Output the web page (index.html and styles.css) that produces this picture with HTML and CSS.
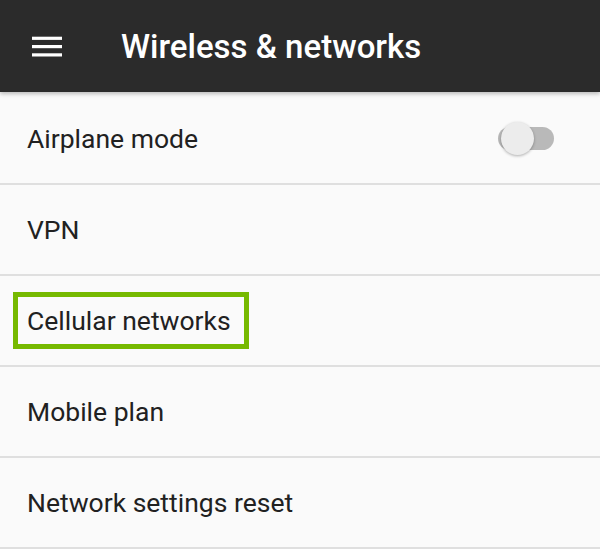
FILE: index.html
```html
<!DOCTYPE html>
<html>
<head>
<meta charset="utf-8">
<link rel="stylesheet" href="styles.css">
</head>
<body>
<header class="appbar">
  <svg class="menu" width="30" height="21" viewBox="0 0 30 21">
    <rect x="0" y="0.7" width="30" height="3.2" fill="#fff"/>
    <rect x="0" y="9" width="30" height="3.2" fill="#fff"/>
    <rect x="0" y="17.3" width="30" height="3.2" fill="#fff"/>
  </svg>
  <h1 class="title">Wireless &amp; networks</h1>
</header>
<ul class="list">
  <li class="row">
    <span class="label">Airplane mode</span>
    <span class="switch"><span class="track"></span><span class="thumb"></span></span>
  </li>
  <li class="row"><span class="label">VPN</span></li>
  <li class="row"><span class="label highlight">Cellular networks</span></li>
  <li class="row"><span class="label">Mobile plan</span></li>
  <li class="row"><span class="label">Network settings reset</span></li>
</ul>
</body>
</html>
```
FILE: styles.css
```css
html, body {
  margin: 0;
  padding: 0;
  background: #fafafa;
  font-family: Roboto, "Noto Sans", sans-serif;
  width: 600px;
  height: 549px;
  overflow: hidden;
}
.appbar {
  height: 92px;
  background: #2b2b2b;
  display: flex;
  align-items: center;
  padding-left: 32px;
  box-shadow: 0 2px 4px rgba(0,0,0,0.25);
  position: relative;
  z-index: 1;
}
.menu {
  display: block;
  flex: none;
}
.title {
  margin: 0 0 0 59px;
  color: #fff;
  font-size: 33px;
  font-weight: 500;
  letter-spacing: 0;
}
.list {
  list-style: none;
  margin: 0;
  padding: 0;
  padding-top: 2px;
}
.row {
  height: 89px;
  border-bottom: 2px solid #dfdfdf;
  display: flex;
  align-items: center;
  padding-left: 27px;
  padding-right: 46px;
}
.label {
  font-size: 26.5px;
  color: #212121;
}
.highlight {
  border: 5px solid #76b900;
  margin-left: -14px;
  padding: 8px 13px 8px 9px;
}
.switch {
  margin-left: auto;
  position: relative;
  width: 56px;
  height: 33px;
  display: block;
}
.track {
  position: absolute;
  right: 0;
  top: 5px;
  width: 56px;
  height: 23px;
  border-radius: 12px;
  background: #b9b9b9;
}
.thumb {
  position: absolute;
  left: 3px;
  top: 0;
  width: 33px;
  height: 33px;
  border-radius: 50%;
  background: #ececec;
  box-shadow: 0 1px 3px rgba(0,0,0,0.3);
}
```
